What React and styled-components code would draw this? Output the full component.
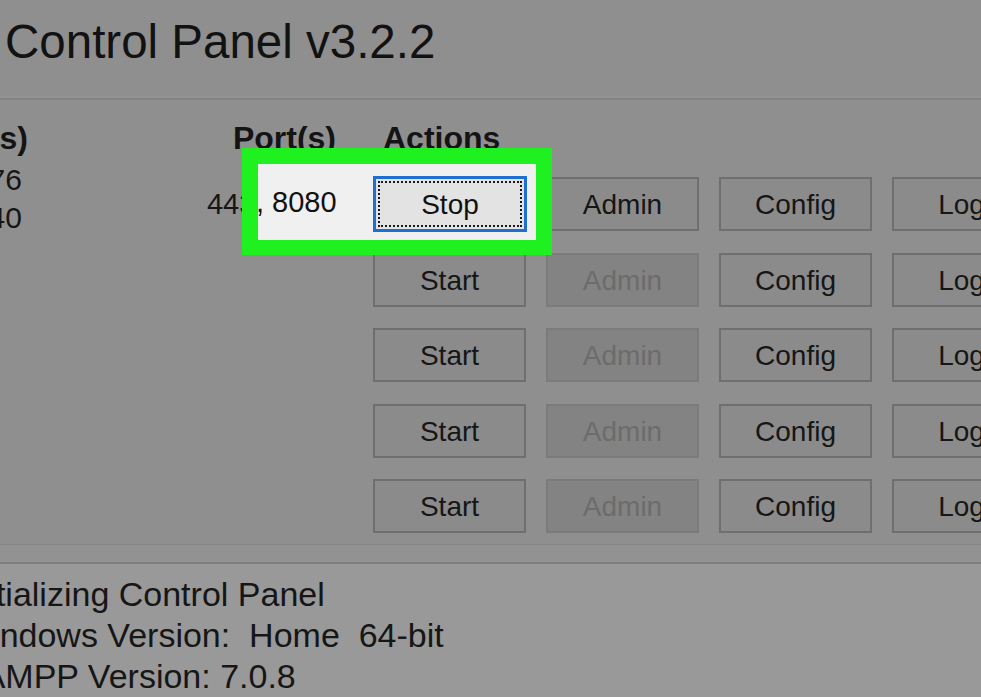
import React from "react";
import styled, { createGlobalStyle } from "styled-components";

const GlobalStyle = createGlobalStyle`
  html, body {
    margin: 0;
    padding: 0;
    background: #8f8f8f;
    overflow: hidden;
  }
  body {
    font-family: "Liberation Sans", Arial, sans-serif;
  }
`;

const Window = styled.div`
  position: relative;
  width: 981px;
  height: 697px;
  display: flex;
  flex-direction: column;
  overflow: hidden;
  background: #8f8f8f;
`;

const Header = styled.div`
  padding: 14px 0 28px 5px;
  border-bottom: 2px solid #838383;
  box-shadow: 0 -3px 0 -1px #939393 inset;
`;

const Title = styled.h1`
  margin: 0;
  font-size: 47.5px;
  line-height: 56px;
  font-weight: normal;
  color: #121212;
  white-space: nowrap;
`;

const Table = styled.div`
  display: grid;
  grid-template-columns: 128px 308px auto;
  grid-template-rows: 34.5px repeat(5, 54px);
  row-gap: 21.5px;
  margin-left: -100px;
  padding: 21px 0 11px;
  border-bottom: 1px solid #868686;
`;

const HeadCell = styled.div`
  font-size: 32px;
  line-height: 34.5px;
  font-weight: bold;
  color: #141414;
  text-align: ${({ align }) => align || "left"};
  padding-left: ${({ indent }) => indent || 0}px;
  white-space: nowrap;
`;

const PidCell = styled.div`
  align-self: center;
  text-align: right;
  font-size: 30px;
  line-height: 38px;
  color: #161616;
  padding: 0 6px 10px 0;
`;

const PortCell = styled.div`
  align-self: center;
  text-align: right;
  font-size: 29px;
  color: #161616;
  white-space: nowrap;
`;

const Actions = styled.div`
  display: flex;
  gap: 20px;
  padding-left: 37px;
`;

const Button = styled.button`
  flex: none;
  width: 153px;
  height: 54px;
  box-sizing: border-box;
  padding: 2px 0 0;
  font-family: "Liberation Sans", Arial, sans-serif;
  font-size: 28px;
  color: ${({ disabled }) => (disabled ? "#6c6c6c" : "#161616")};
  background: ${({ disabled }) => (disabled ? "#838383" : "#8b8b8b")};
  border: 2px solid ${({ disabled }) => (disabled ? "#7b7b7b" : "#6f6f6f")};
  white-space: nowrap;
`;

const Band = styled.div`
  height: 17px;
  border-bottom: 2px solid #7e7e7e;
  background: #929292;
`;

const Log = styled.div`
  flex: 1;
  background: #999999;
  padding-top: 10px;
  font-size: 34px;
  line-height: 41px;
  color: #161616;
`;

const LogLine = styled.div`
  margin-left: -40px;
  white-space: pre;
`;

const Spotlight = styled.div`
  position: absolute;
  left: 242px;
  top: 148px;
  width: 310px;
  height: 107px;
  box-sizing: border-box;
  border: 16px solid #1ff01f;
  border-bottom-width: 15px;
  background: #f0f0f0;
  display: flex;
  align-items: center;
`;

const SpotPort = styled.div`
  flex: none;
  width: 115px;
  margin-left: -2px;
  margin-right: 2px;
  font-size: 29px;
  color: #111111;
  white-space: pre;
`;

const StopButton = styled.button`
  width: 154px;
  height: 56px;
  margin-top: 3px;
  box-sizing: border-box;
  padding: 2px 0 0;
  font-family: "Liberation Sans", Arial, sans-serif;
  font-size: 28px;
  color: #111111;
  background: #e3e3e3;
  border: 3px solid #1f6fd1;
  outline: 2px dotted #1a1a1a;
  outline-offset: -7px;
`;

const rows = [
  { pids: ["9176", "10540"], ports: "443, 8080", running: true },
  { pids: [], ports: "", running: false },
  { pids: [], ports: "", running: false },
  { pids: [], ports: "", running: false },
  { pids: [], ports: "", running: false },
];

const logLines = [
  "Initializing Control Panel",
  "Windows Version:  Home  64-bit",
  "XAMPP Version: 7.0.8",
];

const App = () => {
  return (
    <Window>
      <GlobalStyle />
      <Header>
        <Title>Control Panel v3.2.2</Title>
      </Header>

      <Table>
        <HeadCell align="right">PID(s)</HeadCell>
        <HeadCell align="right">Port(s)</HeadCell>
        <HeadCell indent={47}>Actions</HeadCell>

        {rows.map((row, index) => (
          <React.Fragment key={index}>
            <PidCell>
              {row.pids.map(pid => (
                <div key={pid}>{pid}</div>
              ))}
            </PidCell>
            <PortCell>{row.ports}</PortCell>
            <Actions>
              <Button>{row.running ? "Stop" : "Start"}</Button>
              <Button disabled={!row.running}>Admin</Button>
              <Button>Config</Button>
              <Button>Logs</Button>
            </Actions>
          </React.Fragment>
        ))}
      </Table>

      <Band />

      <Log>
        {logLines.map(line => (
          <LogLine key={line}>{line}</LogLine>
        ))}
      </Log>

      <Spotlight>
        <SpotPort>, 8080</SpotPort>
        <StopButton>Stop</StopButton>
      </Spotlight>
    </Window>
  );
};

export default App;
